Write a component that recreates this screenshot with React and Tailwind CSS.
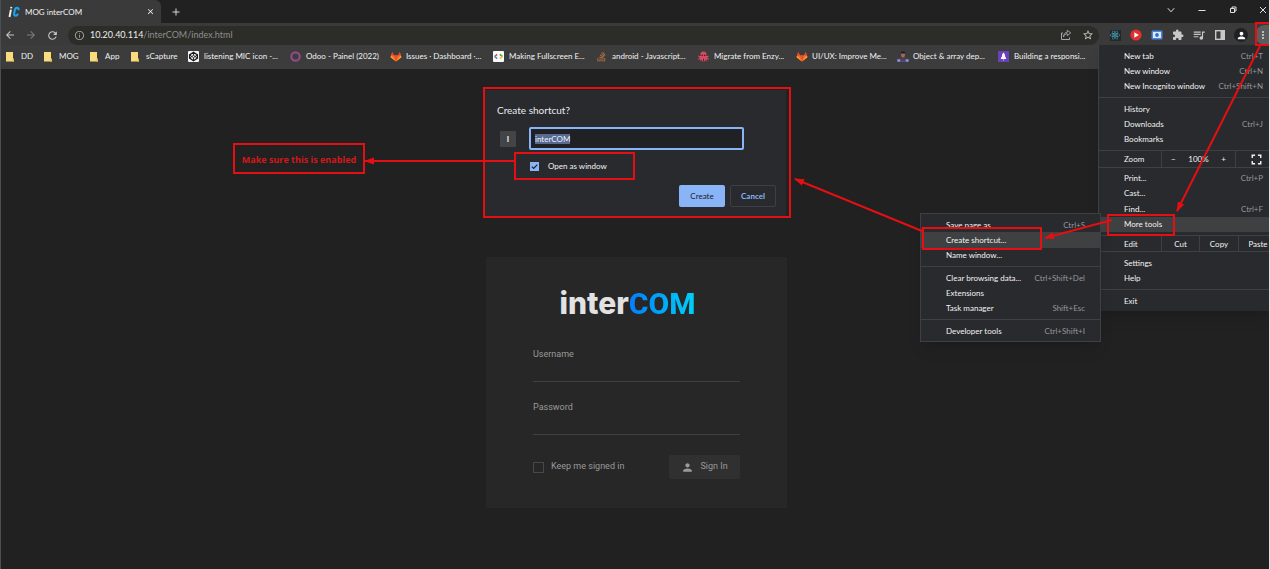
import { useEffect, useRef } from "react";
import {
  MdArrowBack,
  MdArrowForward,
  MdRefresh,
  MdInfoOutline,
  MdStarBorder,
  MdExtension,
  MdQueueMusic,
  MdPerson,
  MdMoreVert,
  MdFullscreen,
  MdClose,
  MdAdd,
} from "react-icons/md";
import { FaReact, FaStackOverflow } from "react-icons/fa";

function Folder() {
  return (
    <svg viewBox="0 0 11 11" className="size-[11px]" aria-hidden="true">
      <path d="M1 1h7v7h1v2.500H1z" fill="#fbdc7c" />
      <path d="M8 7.600h1v2.900H7z" fill="#e6bd55" />
    </svg>
  );
}

function Codepen() {
  return (
    <svg viewBox="0 0 11 11" className="size-[11px]" aria-hidden="true">
      <rect width="11" height="11" rx="1" fill="#f4f4f4" />
      <g fill="none" stroke="#1c1c1c">
        <path d="M5.500 1.300 9.400 3.900v3.200L5.500 9.700 1.600 7.100V3.900z" strokeWidth="1.300" />
        <path d="M1.600 3.900l3.900 2.800 3.900-2.800M1.600 7.100l3.900-2.800 3.900 2.800M5.500 1.300v3M5.500 6.700v3" strokeWidth=".9" />
      </g>
    </svg>
  );
}

function Ring() {
  return (
    <svg viewBox="0 0 11 11" className="size-[11px]" aria-hidden="true">
      <circle cx="5.500" cy="5.500" r="4.200" fill="none" stroke="#8f4a86" strokeWidth="2.200" />
    </svg>
  );
}

function Gitlab() {
  return (
    <svg viewBox="0 0 12 11" className="h-[11px] w-[12px]" aria-hidden="true">
      <path d="M6 10.500.6 6.300 2.200.9 4 4.600h4L9.800.9l1.600 5.400z" fill="#fc6d26" />
      <path d="M2.200.9 4 4.600H1.100zM9.800.9 8 4.600h2.900z" fill="#e24329" />
      <path d="M.6 6.300 1.100 4.600 6 10.500zM11.400 6.300l-.5-1.700L6 10.500z" fill="#fca326" />
      <path d="M4 4.600h4L6 10.500z" fill="#e8502b" />
    </svg>
  );
}

function CodeSquare() {
  return (
    <svg viewBox="0 0 11 11" className="size-[11px]" aria-hidden="true">
      <rect width="11" height="11" rx="1" fill="#fafafa" />
      <g fill="none" strokeWidth="1.600">
        <path d="M4.200 3.300 1.600 5.500" stroke="#e8453c" />
        <path d="M1.600 5.500l2.600 2.200" stroke="#4285f4" />
        <path d="M6.800 3.300l2.600 2.200" stroke="#34a853" />
        <path d="M9.400 5.500 6.800 7.700" stroke="#f9bb2d" />
      </g>
    </svg>
  );
}

function Octopus() {
  return (
    <svg viewBox="0 0 11 11" className="size-[11px]" aria-hidden="true">
      <path d="M5.500.6c1.900 0 3 1.200 3 2.700 0 .8-.2 1.300-.4 1.800h1.600l.9-.8v1.600l-1.700.5 1.700 1.200v1.600l-1-.9-1.200-.5.5 1.500-.8 1.200-.8-2.200-.6 2.200h-2.400l-.6-2.200-.8 2.200-.8-1.200.5-1.500-1.200.5-1 .9V7.600l1.700-1.200-1.700-.5V4.300l.9.8h1.600c-.2-.5-.4-1-.4-1.800 0-1.500 1.100-2.700 3-2.700z" fill="#d94c60" />
      <circle cx="4.300" cy="4.400" r=".8" fill="#4a2030" />
      <circle cx="6.700" cy="4.400" r=".8" fill="#4a2030" />
      <path d="M5.500 7.500v3" stroke="#4a2030" strokeWidth=".8" />
    </svg>
  );
}

function Developer() {
  return (
    <svg viewBox="0 0 12 11" className="h-[11px] w-[12px]" aria-hidden="true">
      <path d="M2 10c0-3 1.500-4.500 4-4.500s4 1.500 4 4.500z" fill="#58394a" />
      <path d="M4 3.500C4 1.500 4.800.5 6 .5s2 1 2 3-.8 2.900-2 2.900-2-.9-2-2.900z" fill="#a06a58" />
      <path d="M3.800 2.600C3.800 1 4.800.2 6 .2s2.200.8 2.200 2.400z" fill="#1f191c" />
      <path d="M.3 8.200h3v2.500h-3zM8.600 8.200h3v2.500h-3z" fill="#7f99e8" />
      <path d="M3.300 9.700h5.300v1H3.300z" fill="#4a5ca8" />
    </svg>
  );
}

function Rocket() {
  return (
    <svg viewBox="0 0 11 11" className="size-[11px]" aria-hidden="true">
      <rect width="11" height="11" fill="#6a41bd" />
      <path d="M5.500 1.600c1.300 1.200 1.600 2.600 1.600 4l1 1.500v1H2.900v-1l1-1.500c0-1.400.3-2.800 1.600-4zM4.700 8.600h1.600l-.8 1.200z" fill="#fff" />
    </svg>
  );
}

const bookmarks = [
  { label: "DD", icon: <Folder />, width: "w-[27px]" },
  { label: "MOG", icon: <Folder />, width: "w-[35px]" },
  { label: "App", icon: <Folder />, width: "w-[30px]" },
  { label: "sCapture", icon: <Folder />, width: "w-[47px]" },
  { label: "listening MIC icon -...", icon: <Codepen />, width: "w-[91px]" },
  { label: "Odoo - Painel (2022)", icon: <Ring />, width: "w-[89px]" },
  { label: "Issues · Dashboard ·...", icon: <Gitlab />, width: "w-[92px]" },
  { label: "Making Fullscreen E...", icon: <CodeSquare />, width: "w-[92px]" },
  { label: "android - Javascript...", icon: <FaStackOverflow className="size-[11px] text-[#b5713c]" />, width: "w-[91px]" },
  { label: "Migrate from Enzy...", icon: <Octopus />, width: "w-[87px]" },
  { label: "UI/UX: Improve Me...", icon: <Gitlab />, width: "w-[90px]" },
  { label: "Object & array dep...", icon: <Developer />, width: "w-[90px]" },
  { label: "Building a responsi...", icon: <Rocket />, width: "w-[91px]" },
];

function TabStrip() {
  return (
    <header className="flex h-[23px] items-stretch justify-between bg-[#212121]">
      <div className="flex items-stretch">
        <div className="flex w-[160px] items-center rounded-tr-md bg-[#3a3a3a] pr-[6px] pl-[7px]">
          <svg viewBox="0 0 12 12" className="size-[12px]" aria-hidden="true">
            <path d="M2.900 3.600 1.500 11" stroke="#f2f2f2" strokeWidth="1.900" fill="none" />
            <path d="M3.400.9 3.100 2.400" stroke="#f2f2f2" strokeWidth="1.900" fill="none" />
            <path d="M10.500 4.200c.3-1.600-.3-2.300-1.400-2.300-1.300 0-2 .8-2.300 2.200l-.6 3.300c-.3 1.500.2 2.400 1.400 2.400s1.900-.7 2.200-2.200" stroke="#19a4ee" strokeWidth="2.100" fill="none" />
          </svg>
          <span className="ml-[5px] flex-1 text-[8px] text-[#f1f3f4]">MOG interCOM</span>
          <button aria-label="Close tab" className="text-[#f1f1f1]">
            <MdClose className="size-[9px]" />
          </button>
        </div>
        <button aria-label="New tab" className="ml-[9px] text-[#d8d8d8]">
          <MdAdd className="size-[12px]" />
        </button>
      </div>
      <div className="flex h-[19px] items-center text-[#e0e0e0]">
        <button aria-label="Search tabs" className="grid w-[31px] place-items-center">
          <svg viewBox="0 0 8 8" className="size-[8px]" fill="none" stroke="currentColor" aria-hidden="true">
            <path d="M.8 2.200 4 5.800l3.200-3.600" />
          </svg>
        </button>
        <button aria-label="Minimize" className="grid w-[31px] place-items-center">
          <svg viewBox="0 0 8 8" className="size-[8px]" fill="none" stroke="currentColor" aria-hidden="true">
            <path d="M.5 4.500h7" />
          </svg>
        </button>
        <button aria-label="Restore" className="grid w-[31px] place-items-center">
          <svg viewBox="0 0 8 8" className="size-[8px]" fill="none" stroke="currentColor" aria-hidden="true">
            <path d="M1.500 2.500h4v4h-4zM3 2.500v-1.500h4v4H5.500" />
          </svg>
        </button>
        <button aria-label="Close" className="grid w-[21px] place-items-center pl-[9px]">
          <svg viewBox="0 0 8 8" className="size-[8px]" fill="none" stroke="currentColor" aria-hidden="true">
            <path d="M1 1l6 6M7 1 1 7" />
          </svg>
        </button>
      </div>
    </header>
  );
}

function Toolbar() {
  return (
    <div className="flex h-[22px] items-center bg-[#3a3a3a] pt-[2px] text-[#c8c8c8]">
      <nav className="flex w-[67px] items-center gap-[9px] pl-[3px]">
        <button aria-label="Back">
          <MdArrowBack className="size-[12px]" />
        </button>
        <button aria-label="Forward" className="text-[#7c7c7c]">
          <MdArrowForward className="size-[12px]" />
        </button>
        <button aria-label="Reload">
          <MdRefresh className="size-[13px]" />
        </button>
      </nav>
      <div className="flex h-[19px] flex-1 items-center rounded-full bg-[#2c2c29] pr-[5px] pl-[6px]">
        <MdInfoOutline className="size-[11px] text-[#a0a0a0]" />
        <p className="ml-[5px] flex-1 text-[9px] text-[#8f8f8b]">
          <span className="text-[#ececec]">10.20.40.114</span>/interCOM/index.html
        </p>
        <button aria-label="Share this page" className="mr-[10px] text-[#a8a8a8]">
          <svg viewBox="0 0 12 12" className="size-[12px]" fill="none" stroke="currentColor" aria-hidden="true">
            <path d="M3 4H1.500v6.500h8V8.500" />
            <path d="M3.500 8C4 5.800 5.300 4.800 7.300 4.700V6.600L10.800 3.900 7.300 1.300v1.900C4.800 3.500 3.500 5.300 3.500 8z" strokeWidth=".9" />
          </svg>
        </button>
        <button aria-label="Bookmark this tab">
          <MdStarBorder className="size-[12px]" />
        </button>
      </div>
      <div className="flex items-center gap-[7px] pl-[9px]">
        <button aria-label="React Developer Tools" className="grid size-[14px] place-items-center">
          <span className="grid size-[11px] place-items-center bg-[#20282b] text-[#4fb4cf]">
            <FaReact className="size-[10px]" />
          </span>
        </button>
        <button aria-label="Video recorder">
          <svg viewBox="0 0 14 14" className="size-[14px]" aria-hidden="true">
            <circle cx="7" cy="7" r="5.600" fill="#e2302e" />
            <path d="M5.300 4.300 9.800 7 5.300 9.700z" fill="#fff" />
          </svg>
        </button>
        <button aria-label="Screen capture">
          <svg viewBox="0 0 14 14" className="size-[14px]" aria-hidden="true">
            <rect x="1.500" y="2.500" width="11" height="9" rx="1.200" fill="#4a87e0" />
            <rect x="3" y="4" width="8" height="6" fill="#dce9fb" />
            <circle cx="7" cy="7" r="1.900" fill="#2f6fd0" />
          </svg>
        </button>
        <button aria-label="Extensions" className="grid size-[14px] place-items-center">
          <MdExtension className="size-[12px]" />
        </button>
        <button aria-label="Media controls" className="grid size-[14px] place-items-center">
          <MdQueueMusic className="size-[14px]" />
        </button>
        <button aria-label="Side panel">
          <svg viewBox="0 0 14 14" className="size-[14px]" aria-hidden="true">
            <rect x="2.700" y="2.700" width="8.600" height="8.600" fill="none" stroke="currentColor" strokeWidth="1.400" />
            <path d="M7.500 2.500h4v9h-4z" fill="currentColor" />
          </svg>
        </button>
        <button aria-label="Profile" className="grid size-[14px] place-items-center rounded-full bg-[#1f2022] text-white">
          <MdPerson className="size-[11px]" />
        </button>
        <button aria-label="Menu" className="grid h-[20px] w-[14px] place-items-center rounded-l-full bg-[#5c5c5c] pl-[2px] text-[#d0d0d0]">
          <MdMoreVert className="size-[12px]" />
        </button>
      </div>
    </div>
  );
}

function BookmarkBar() {
  return (
    <nav className="flex h-[24px] items-center gap-[11px] overflow-hidden bg-[#3c3c3c] pb-[2px] pl-[4px] text-[8px] text-[#f1f1f1]">
      {bookmarks.map((b) => (
        <a key={b.label} href="#" className={`flex shrink-0 items-center gap-[5px] whitespace-nowrap ${b.width}`}>
          <span className="grid w-[11px] shrink-0 place-items-center">{b.icon}</span>
          {b.label}
        </a>
      ))}
    </nav>
  );
}

function MenuItem({ label, keys, active }) {
  return (
    <button
      role="menuitem"
      className={`flex w-full items-center justify-between pr-[6px] pl-[25px] whitespace-nowrap ${active ? "bg-[#3f4042]" : ""}`}
    >
      <span>{label}</span>
      {keys && <span className="text-[#94979b]">{keys}</span>}
    </button>
  );
}

function MainMenu() {
  return (
    <div role="menu" className="absolute top-[45px] right-0 w-[171px] border-l border-[#3f4043] bg-[#292a2d] text-[8px] text-[#f1f3f4] shadow-lg">
      <div className="border-b border-[#3f4043] py-[3px]">
        <div className="grid h-[46px] grid-rows-3">
          <MenuItem label="New tab" keys="Ctrl+T" />
          <MenuItem label="New window" keys="Ctrl+N" />
          <MenuItem label="New Incognito window" keys="Ctrl+Shift+N" />
        </div>
      </div>
      <div className="border-b border-[#3f4043] py-[3px]">
        <div className="grid h-[46px] grid-rows-3">
          <MenuItem label="History" />
          <MenuItem label="Downloads" keys="Ctrl+J" />
          <MenuItem label="Bookmarks" />
        </div>
      </div>
      <div className="flex h-[17px] items-stretch border-b border-[#3f4043]">
        <span className="flex flex-1 items-center pl-[25px]">Zoom</span>
        <div className="flex w-[75px] items-center justify-between border-x border-[#3f4043] px-[9px]">
          <button aria-label="Zoom out">−</button>
          <span>100%</span>
          <button aria-label="Zoom in">+</button>
        </div>
        <button aria-label="Full screen" className="flex w-[33px] items-center justify-center pl-[8px]">
          <MdFullscreen className="size-[17px]" />
        </button>
      </div>
      <div className="border-b border-[#3f4043] pt-[2px] pb-[3px]">
        <div className="grid h-[62px] grid-rows-4">
          <MenuItem label="Print..." keys="Ctrl+P" />
          <MenuItem label="Cast..." />
          <MenuItem label="Find..." keys="Ctrl+F" />
          <MenuItem label="More tools" active />
        </div>
      </div>
      <div className="flex h-[16px] items-stretch overflow-hidden border-b border-[#3f4043]">
        <span className="flex flex-1 items-center pl-[25px]">Edit</span>
        <button className="w-[38px] border-l border-[#3f4043]">Cut</button>
        <button className="w-[39px] border-l border-[#3f4043]">Copy</button>
        <button className="w-[31px] border-l border-[#3f4043] pl-[8px]">Paste</button>
      </div>
      <div className="border-b border-[#3f4043] py-[3px]">
        <div className="grid h-[31px] grid-rows-2">
          <MenuItem label="Settings" />
          <MenuItem label="Help" />
        </div>
      </div>
      <div className="py-[3px]">
        <div className="grid h-[15px]">
          <MenuItem label="Exit" />
        </div>
      </div>
    </div>
  );
}

function ToolsMenu() {
  return (
    <div role="menu" className="absolute top-[213px] right-[168px] w-[181px] border border-[#3f4043] bg-[#292a2d] text-[8px] text-[#f1f3f4] shadow-lg">
      <div className="border-b border-[#3f4043] py-[3px]">
        <div className="grid h-[46px] grid-rows-3 [&>button]:pr-[15px]">
          <MenuItem label="Save page as..." keys="Ctrl+S" />
          <MenuItem label="Create shortcut..." active />
          <MenuItem label="Name window..." />
        </div>
      </div>
      <div className="border-b border-[#3f4043] py-[3px]">
        <div className="grid h-[46px] grid-rows-3 [&>button]:pr-[15px]">
          <MenuItem label="Clear browsing data..." keys="Ctrl+Shift+Del" />
          <MenuItem label="Extensions" />
          <MenuItem label="Task manager" keys="Shift+Esc" />
        </div>
      </div>
      <div className="py-[3px]">
        <div className="grid h-[15px] [&>button]:pr-[15px]">
          <MenuItem label="Developer tools" keys="Ctrl+Shift+I" />
        </div>
      </div>
    </div>
  );
}

function ShortcutDialog() {
  const nameRef = useRef(null);
  useEffect(() => {
    nameRef.current.focus();
    nameRef.current.select();
  }, []);
  return (
    <form
      role="dialog"
      aria-labelledby="shortcut-title"
      onSubmit={(e) => e.preventDefault()}
      className="absolute top-[90px] left-1/2 flex w-[302px] -translate-x-1/2 flex-col bg-[#292a2d] pt-[12px] pr-[10px] pb-[9px] pl-[13px] text-[8px] text-[#f1f3f4]"
    >
      <h2 id="shortcut-title" className="text-[10px] leading-[16px] text-[#e8eaed]">Create shortcut?</h2>
      <div className="mt-[9px] flex items-center pl-[3px]">
        <span className="grid size-[16px] place-items-center rounded-[1px] bg-[#434446] font-bold">I</span>
        <input
          ref={nameRef}
          aria-label="Shortcut name"
          defaultValue="interCOM"
          className="ml-[13px] h-[23px] w-[215px] rounded-[2px] border-2 border-[#8ab4f8] bg-[#202124] px-[4px] outline-none selection:bg-[#566a94] selection:text-[#f1f3f4]"
        />
      </div>
      <label className="mt-[9px] ml-[33px] flex h-[14px] items-center gap-[9px]">
        <span className="grid size-[9px] place-items-center">
          <input type="checkbox" defaultChecked className="col-start-1 row-start-1 size-[9px] appearance-none bg-[#8ab4f8]" />
          <svg viewBox="0 0 9 9" className="pointer-events-none col-start-1 row-start-1 size-[9px]" fill="none" stroke="#202124" strokeWidth="1.200" aria-hidden="true">
            <path d="M1.800 4.600l1.900 1.900 3.600-3.900" />
          </svg>
        </span>
        Open as window
      </label>
      <div className="mt-[12px] flex justify-end gap-[5px]">
        <button type="submit" className="h-[22px] w-[46px] rounded-[2px] bg-[#8ab4f8] text-[#202124]">Create</button>
        <button type="button" className="h-[22px] w-[46px] rounded-[2px] border border-[#3c4043] font-bold text-[#8ab4f8]">Cancel</button>
      </div>
    </form>
  );
}

function LoginCard() {
  return (
    <form
      onSubmit={(e) => e.preventDefault()}
      className="mx-auto mt-[188px] flex w-[301px] flex-col bg-[#272727] px-[47px] pt-[28px] pb-[29px] font-['Roboto',sans-serif] text-[9px] text-[#9a9a9a]"
    >
      <h1 className="pr-[18px] text-center font-['Inter',sans-serif] text-[30px] leading-[36px] font-extrabold text-[#e2e2e2]">
        inter
        <span className="bg-linear-to-r from-[#0a7cff] to-[#00d0f5] bg-clip-text font-['Roboto',sans-serif] text-transparent">COM</span>
      </h1>
      <label className="mt-[26px] block">
        <span className="block leading-[12px]">Username</span>
        <input className="block h-[22px] w-full border-b border-[#404040] bg-transparent text-[#e2e2e2] outline-none" />
      </label>
      <label className="mt-[19px] block">
        <span className="block leading-[12px]">Password</span>
        <input type="password" className="block h-[22px] w-full border-b border-[#404040] bg-transparent text-[#e2e2e2] outline-none" />
      </label>
      <div className="mt-[20px] flex items-center justify-between">
        <label className="flex items-center gap-[7px]">
          <input type="checkbox" className="size-[11px] appearance-none border border-[#484848]" />
          Keep me signed in
        </label>
        <button className="flex h-[24px] w-[71px] items-center justify-center gap-[6px] rounded-[2px] bg-[#303030]">
          <MdPerson className="size-[13px]" />
          Sign In
        </button>
      </div>
    </form>
  );
}

function Annotations() {
  return (
    <div className="pointer-events-none absolute inset-0 overflow-hidden">
      <svg width="1269" height="569" fill="none" stroke="#e30f13" strokeWidth="2" aria-hidden="true">
        <defs>
          <marker id="head" markerUnits="userSpaceOnUse" markerWidth="10" markerHeight="8" refX="9" refY="4" orient="auto">
            <path d="M0 .5 10 4 0 7.500z" fill="#e30f13" stroke="none" />
          </marker>
        </defs>
        <rect x="1256" y="23" width="20" height="22" />
        <rect x="1108" y="215" width="66" height="20" />
        <rect x="923" y="228" width="118" height="21" />
        <rect x="484" y="88" width="306" height="129" />
        <rect x="515" y="153" width="119" height="26" />
        <path d="M1260 46 1177 211" markerEnd="url(#head)" />
        <path d="M1112 220 1045 238" markerEnd="url(#head)" />
        <path d="M922 231 795 179" markerEnd="url(#head)" />
        <path d="M514 161H365" markerEnd="url(#head)" />
      </svg>
      <p className="absolute top-[143px] left-[233px] flex h-[31px] w-[132px] items-center justify-center border-2 border-[#e30f13] pt-[2px] font-['Open_Sans',sans-serif] text-[9px] font-bold whitespace-nowrap text-[#d4171b]">
        Make sure this is enabled
      </p>
    </div>
  );
}

export default function App() {
  return (
    <div className="relative font-['Lato',sans-serif]">
      <div className="relative min-h-screen overflow-hidden border-r border-l border-r-[#e4e4e4] border-l-[#4a4f55] bg-[#212121]">
        <TabStrip />
        <Toolbar />
        <BookmarkBar />
        <main className="flow-root pl-[3px]">
          <LoginCard />
        </main>
        <ShortcutDialog />
        <MainMenu />
        <ToolsMenu />
      </div>
      <Annotations />
    </div>
  );
}
